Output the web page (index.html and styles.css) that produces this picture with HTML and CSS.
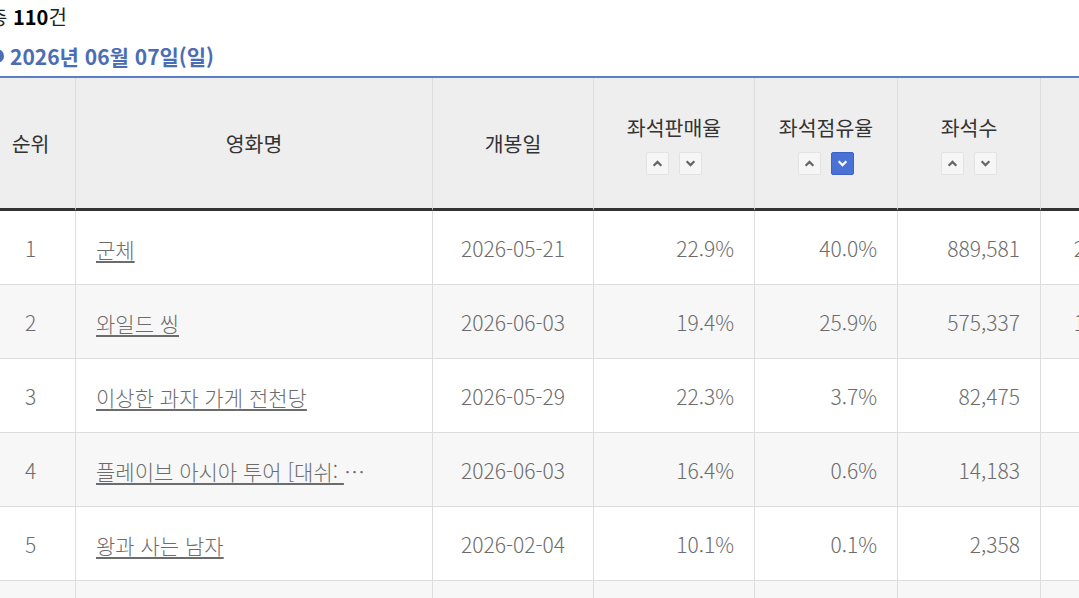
FILE: index.html
```html
<!DOCTYPE html>
<html lang="ko">
<head>
<meta charset="utf-8">
<title>좌석점유율</title>
<link rel="stylesheet" href="styles.css">
</head>
<body>
<div class="page">
  <p class="summary">총 <strong>110</strong>건</p>
  <h3 class="date-title"><span class="bullet"></span>2026년 06월 07일(일)</h3>
  <table class="board">
    <colgroup>
      <col class="c-rank">
      <col class="c-title">
      <col class="c-date">
      <col class="c-num">
      <col class="c-num2">
      <col class="c-num2">
      <col class="c-num2">
    </colgroup>
    <thead>
      <tr>
        <th>순위</th>
        <th>영화명</th>
        <th>개봉일</th>
        <th><div class="th-label">좌석판매율</div>
          <div class="sort"><button class="sort-btn" type="button"><svg viewBox="0 0 10 6"><polyline points="1.5,5 5,1.5 8.5,5"/></svg></button><button class="sort-btn" type="button"><svg viewBox="0 0 10 6"><polyline points="1.5,1 5,4.5 8.5,1"/></svg></button></div></th>
        <th><div class="th-label">좌석점유율</div>
          <div class="sort"><button class="sort-btn" type="button"><svg viewBox="0 0 10 6"><polyline points="1.5,5 5,1.5 8.5,5"/></svg></button><button class="sort-btn is-active" type="button"><svg viewBox="0 0 10 6"><polyline points="1.5,1 5,4.5 8.5,1"/></svg></button></div></th>
        <th><div class="th-label">좌석수</div>
          <div class="sort"><button class="sort-btn" type="button"><svg viewBox="0 0 10 6"><polyline points="1.5,5 5,1.5 8.5,5"/></svg></button><button class="sort-btn" type="button"><svg viewBox="0 0 10 6"><polyline points="1.5,1 5,4.5 8.5,1"/></svg></button></div></th>
        <th><div class="th-label">관객수</div>
          <div class="sort"><button class="sort-btn" type="button"><svg viewBox="0 0 10 6"><polyline points="1.5,5 5,1.5 8.5,5"/></svg></button><button class="sort-btn" type="button"><svg viewBox="0 0 10 6"><polyline points="1.5,1 5,4.5 8.5,1"/></svg></button></div></th>
      </tr>
    </thead>
    <tbody>
      <tr>
        <td class="center">1</td>
        <td class="title"><a href="#" class="movie">군체</a></td>
        <td class="center">2026-05-21</td>
        <td class="right">22.9%</td>
        <td class="right">40.0%</td>
        <td class="right">889,581</td>
        <td class="right">2,225,814</td>
      </tr>
      <tr>
        <td class="center">2</td>
        <td class="title"><a href="#" class="movie">와일드 씽</a></td>
        <td class="center">2026-06-03</td>
        <td class="right">19.4%</td>
        <td class="right">25.9%</td>
        <td class="right">575,337</td>
        <td class="right">1,482,310</td>
      </tr>
      <tr>
        <td class="center">3</td>
        <td class="title"><a href="#" class="movie">이상한 과자 가게 전천당</a></td>
        <td class="center">2026-05-29</td>
        <td class="right">22.3%</td>
        <td class="right">3.7%</td>
        <td class="right">82,475</td>
        <td class="right">213,540</td>
      </tr>
      <tr>
        <td class="center">4</td>
        <td class="title"><a href="#" class="movie">플레이브 아시아 투어 [대쉬: 블루 플래닛] 더 무비</a></td>
        <td class="center">2026-06-03</td>
        <td class="right">16.4%</td>
        <td class="right">0.6%</td>
        <td class="right">14,183</td>
        <td class="right">35,120</td>
      </tr>
      <tr>
        <td class="center">5</td>
        <td class="title"><a href="#" class="movie">왕과 사는 남자</a></td>
        <td class="center">2026-02-04</td>
        <td class="right">10.1%</td>
        <td class="right">0.1%</td>
        <td class="right">2,358</td>
        <td class="right">3,921</td>
      </tr>
      <tr>
        <td class="center">6</td>
        <td class="title"><a href="#" class="movie">드래곤 길들이기</a></td>
        <td class="center">2026-06-05</td>
        <td class="right">9.8%</td>
        <td class="right">0.1%</td>
        <td class="right">1,204</td>
        <td class="right">2,118</td>
      </tr>
    </tbody>
  </table>
</div>
</body>
</html>
```

FILE: styles.css
```css
html, body {
  margin: 0;
  padding: 0;
  overflow: hidden;
  background: #fff;
}

body {
  font-family: "Noto Sans CJK KR", "Noto Sans", sans-serif;
  color: #333;
}

.page {
  margin-left: -14px;
  width: 1220px;
}

.summary {
  margin: 3px 0 0 3px;
  font-size: 20px;
  line-height: 28px;
  color: #222;
}

.summary strong {
  font-weight: 700;
  color: #000;
}

.date-title {
  margin: 11px 0 0 4px;
  display: flex;
  align-items: center;
  font-size: 21px;
  line-height: 28px;
  font-weight: 700;
  color: #4a6db5;
}

.bullet {
  width: 14px;
  height: 14px;
  border-radius: 50%;
  background: #4a6db5;
  margin-right: 6px;
}

.board {
  margin-top: 6px;
  width: 1198px;
  table-layout: fixed;
  border-collapse: separate;
  border-spacing: 0;
  border-top: 2px solid #5b7fc7;
}

.c-rank { width: 90px; }
.c-title { width: 357px; }
.c-date { width: 161px; }
.c-num { width: 161px; }
.c-num2 { width: 143px; }

.board th {
  height: 133px;
  padding: 0;
  background: #eeeeee;
  border-right: 1px solid #dcdcdc;
  border-bottom: 3px solid #333;
  font-size: 20.5px;
  font-weight: 400;
  color: #333;
  text-align: center;
  vertical-align: middle;
  box-sizing: border-box;
}

.th-label {
  line-height: 26px;
  margin-top: 2px;
}

.sort {
  display: flex;
  justify-content: center;
  gap: 10px;
  margin-top: 12px;
}

.sort-btn {
  width: 23px;
  height: 23px;
  padding: 0;
  border: 1px solid #e2e2e2;
  border-radius: 2px;
  background: #f6f6f6;
  display: flex;
  align-items: center;
  justify-content: center;
}

.sort-btn svg {
  width: 11px;
  height: 7px;
  fill: none;
  stroke: #666;
  stroke-width: 2;
}

.sort-btn.is-active {
  background: #4a72d6;
  border-color: #3d63c4;
}

.sort-btn.is-active svg {
  stroke: #fff;
}

.board tbody tr {
  height: 74px;
}

.board tbody tr:nth-child(even) td {
  background: #f7f7f7;
}

.board td {
  padding: 0 20px;
  border-right: 1px solid #dddddd;
  border-bottom: 1px solid #dddddd;
  font-size: 21px;
  font-weight: 300;
  color: #6c6c6c;
  vertical-align: middle;
  white-space: nowrap;
  overflow: hidden;
}

.board td.center { text-align: center; }
.board td.right { text-align: right; }
.board td.title { text-align: left; }

.movie {
  display: inline-block;
  max-width: 272px;
  overflow: hidden;
  text-overflow: ellipsis;
  white-space: nowrap;
  vertical-align: middle;
  color: #6c6c6c;
  text-decoration: underline;
  text-underline-offset: 3px;
}
```
